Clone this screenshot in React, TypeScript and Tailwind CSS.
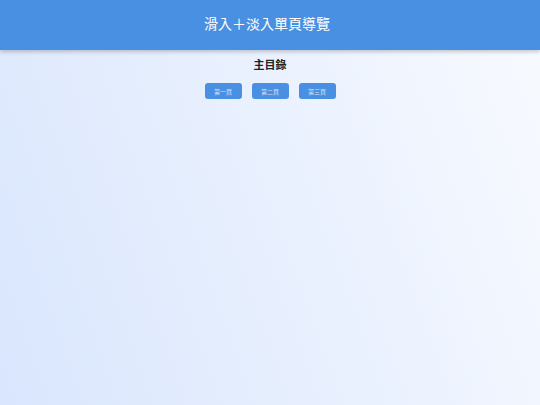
export default function App() {
  const pages = ['第一頁', '第二頁', '第三頁']
  return (
    <div className="w-[540px] h-[405px] flex flex-col bg-[linear-gradient(70deg,#d9e6fd,#f8faff)] font-['Noto_Sans_CJK_TC',sans-serif]">
      <header className="flex-shrink-0 h-[50px] flex items-center justify-center bg-[#4a90e2] shadow-[0_2px_4px_rgba(0,0,0,0.2)]">
        <h1 className="text-[14px] leading-none text-white font-['Liberation_Serif','Noto_Sans_CJK_TC',serif] -ml-[6px]">滑入＋淡入單頁導覽</h1>
      </header>
      <main className="flex flex-col items-center pt-[7px]">
        <h2 className="text-[11px] font-bold text-[#222] leading-[14px]">主目錄</h2>
        <div className="flex gap-[10px] mt-[12px]">
          {pages.map(p => (
            <button key={p} className="w-[37px] h-[16px] rounded-[3px] bg-[#4a90e2] text-[6px] text-white/75 flex items-center justify-center">
              {p}
            </button>
          ))}
        </div>
      </main>
    </div>
  )
}
